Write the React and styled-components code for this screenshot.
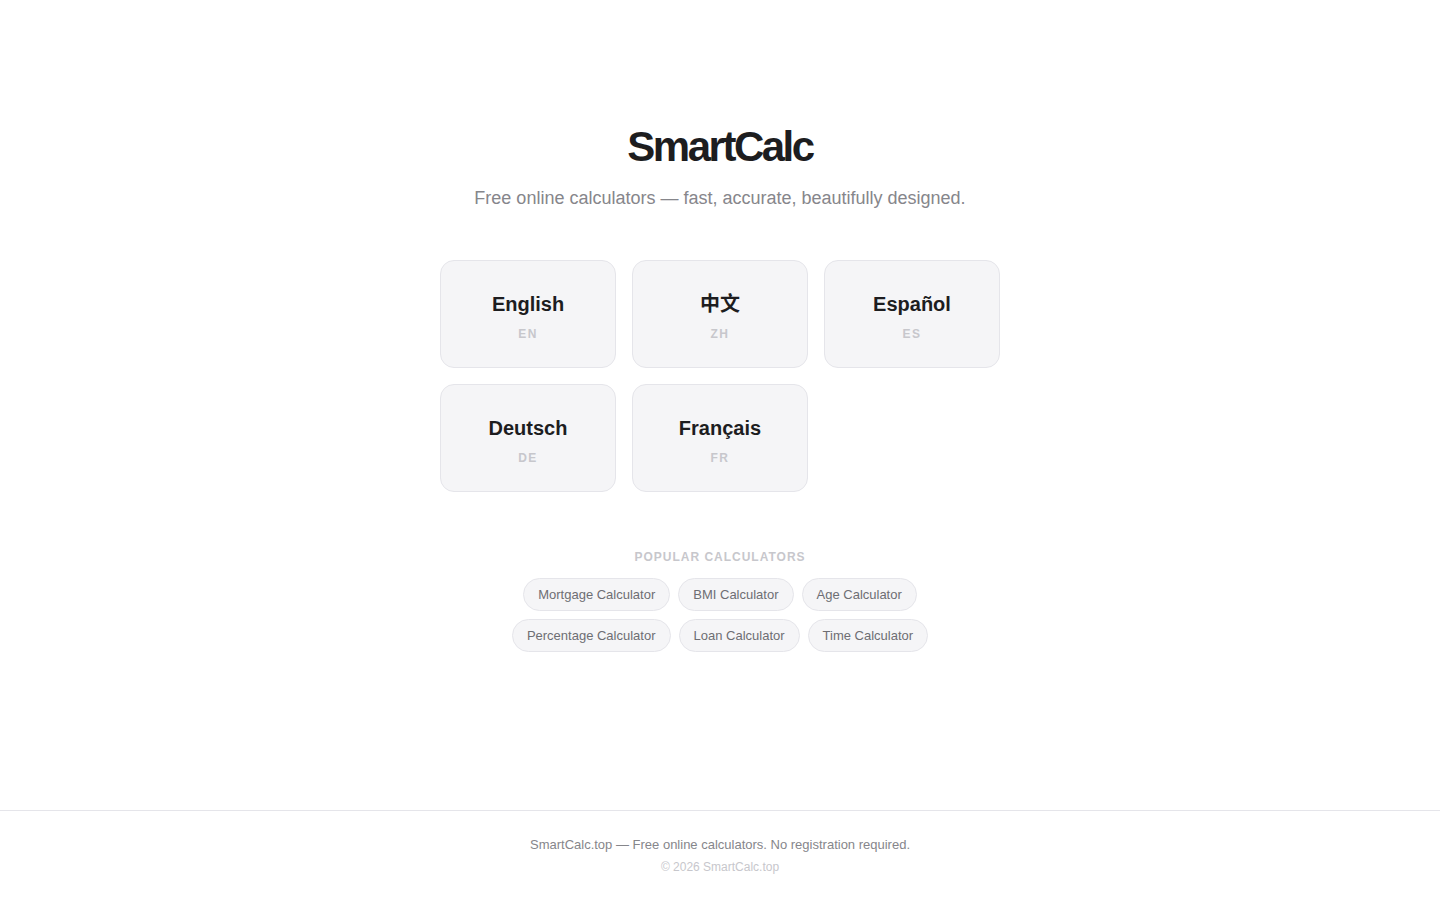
import React from "react";
import styled, { createGlobalStyle } from "styled-components";

const languages = [
  { name: "English", code: "EN" },
  { name: "中文", code: "ZH" },
  { name: "Español", code: "ES" },
  { name: "Deutsch", code: "DE" },
  { name: "Français", code: "FR" },
];

const popular = [
  ["Mortgage Calculator", "BMI Calculator", "Age Calculator"],
  ["Percentage Calculator", "Loan Calculator", "Time Calculator"],
];

function App() {
  return (
    <>
      <GlobalStyle />
      <Page>
        <Main>
          <Title>SmartCalc</Title>
          <Tagline>Free online calculators — fast, accurate, beautifully designed.</Tagline>

          <LangGrid>
            {languages.map((lang) => (
              <LangCard key={lang.code} href="#">
                <LangName>{lang.name}</LangName>
                <LangCode>{lang.code}</LangCode>
              </LangCard>
            ))}
          </LangGrid>

          <PopularSection>
            <SectionLabel>Popular Calculators</SectionLabel>
            {popular.map((row, i) => (
              <PillRow key={i}>
                {row.map((item) => (
                  <Pill key={item} href="#">
                    {item}
                  </Pill>
                ))}
              </PillRow>
            ))}
          </PopularSection>
        </Main>

        <Footer>
          <FooterText>SmartCalc.top — Free online calculators. No registration required.</FooterText>
          <Copyright>© 2026 SmartCalc.top</Copyright>
        </Footer>
      </Page>
    </>
  );
}

export default App;

const GlobalStyle = createGlobalStyle`
  * {
    box-sizing: border-box;
  }
  body {
    margin: 0;
    background: #fff;
    color: #1d1d1f;
    font-family: "Liberation Sans", Arial, "Noto Sans CJK SC", sans-serif;
    -webkit-font-smoothing: antialiased;
  }
`;

const Page = styled.div`
  min-height: 100vh;
  display: flex;
  flex-direction: column;
`;

const Main = styled.main`
  flex: 1;
  display: flex;
  flex-direction: column;
  align-items: center;
  padding: 124px 24px 60px;
`;

const Title = styled.h1`
  margin: 0;
  font-size: 42px;
  line-height: 1.1;
  font-weight: 700;
  letter-spacing: -2.5px;
  color: #1d1d1f;
`;

const Tagline = styled.p`
  margin: 15px 0 0;
  font-size: 18px;
  line-height: 1.5;
  color: #86868b;
`;

const LangGrid = styled.div`
  margin-top: 48px;
  display: grid;
  grid-template-columns: repeat(3, 176px);
  gap: 16px;
`;

const LangCard = styled.a`
  height: 108px;
  display: flex;
  flex-direction: column;
  align-items: center;
  padding-top: 31px;
  background: #f5f5f7;
  border: 1px solid #e5e5ea;
  border-radius: 14px;
  text-decoration: none;
  color: inherit;
`;

const LangName = styled.span`
  font-size: 20px;
  line-height: 24px;
  font-weight: 700;
  color: #1d1d1f;
`;

const LangCode = styled.span`
  margin-top: 11px;
  font-size: 12px;
  line-height: 14px;
  font-weight: 700;
  letter-spacing: 1.5px;
  color: #c7c7cc;
`;

const PopularSection = styled.section`
  margin-top: 58px;
  display: flex;
  flex-direction: column;
  align-items: center;
  gap: 8px;
`;

const SectionLabel = styled.h2`
  margin: 0 0 6px;
  font-size: 12px;
  line-height: 14px;
  font-weight: 700;
  letter-spacing: 1px;
  text-transform: uppercase;
  color: #c7c7cc;
`;

const PillRow = styled.div`
  display: flex;
  justify-content: center;
  gap: 8px;
`;

const Pill = styled.a`
  padding: 8px 14px;
  font-size: 13px;
  line-height: 15px;
  color: #6e6e73;
  background: #f5f5f7;
  border: 1px solid #e5e5ea;
  border-radius: 999px;
  text-decoration: none;
`;

const Footer = styled.footer`
  border-top: 1px solid #e5e5ea;
  padding: 24px;
  text-align: center;
`;

const FooterText = styled.p`
  margin: 0;
  font-size: 13px;
  line-height: 19px;
  color: #86868b;
`;

const Copyright = styled.p`
  margin: 4px 0 0;
  font-size: 12px;
  line-height: 18px;
  color: #c7c7cc;
`;
